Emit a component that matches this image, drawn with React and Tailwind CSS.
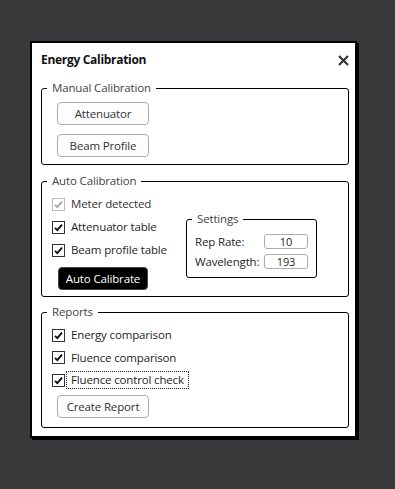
import React, { useState } from "react";

function Check({ checked, disabled, onChange, label, focused }) {
  return (
    <label className="flex items-center h-[18px] cursor-default select-none">
      <span
        onClick={disabled ? undefined : onChange}
        className={`flex items-center justify-center w-[13px] h-[13px] border bg-white ${
          disabled ? "border-[#bcbcbc]" : "border-[#333]"
        }`}
      >
        {checked && (
          <svg width="11" height="11" viewBox="0 0 11 11">
            <path
              d="M2 5.8 L4.3 8.2 L9 2.6"
              fill="none"
              stroke={disabled ? "#a8a8a8" : "#111"}
              strokeWidth="1.9"
            />
          </svg>
        )}
      </span>
      <span
        className={`ml-px px-[4px] leading-[16px] border ${
          focused ? "border-dotted border-[#222]" : "border-transparent"
        }`}
      >
        {label}
      </span>
    </label>
  );
}

function Group({ title, className = "", bodyClass = "", children }) {
  return (
    <fieldset className={`border border-black rounded-[3px] ${className}`}>
      <legend className="ml-[5px] px-[5px] text-[11.5px] tracking-[-0.15px] leading-[16px] text-[#444]">{title}</legend>
      <div className={bodyClass}>{children}</div>
    </fieldset>
  );
}

function Btn({ children }) {
  return (
    <button className="w-[92px] h-[23px] rounded-[4px] border border-[#adadad] bg-[#fdfdfd] text-[11.5px] tracking-[-0.15px] text-[#333]">
      {children}
    </button>
  );
}

export default function App() {
  const [checks, setChecks] = useState({
    att: true,
    beam: true,
    energy: true,
    fluence: true,
    control: true,
  });
  const toggle = (k) => () => setChecks({ ...checks, [k]: !checks[k] });

  return (
    <div
      className="w-[395px] h-[489px] bg-[#3a3a3d] pl-[30px] pt-[41px] text-[#1e1e1e]"
      style={{ fontFamily: "'Open Sans', 'Noto Sans', sans-serif" }}
    >
      <div className="w-[327px] h-[397px] bg-white border-2 border-black shadow-[2px_2px_0_#000] pl-[9px] pr-[6px] pt-[8px]">
        {/* Header */}
        <div className="flex items-center justify-between h-[18px]">
          <h1 className="text-[12px] font-bold tracking-[-0.3px] text-[#111]">Energy Calibration</h1>
          <svg width="11" height="11" viewBox="0 0 11 11">
            <path d="M1 1 L10 10 M10 1 L1 10" stroke="#333" strokeWidth="2.2" />
          </svg>
        </div>

        {/* Manual Calibration */}
        <Group title="Manual Calibration" className="mt-[11px]" bodyClass="pl-[15px] pt-[6px] pb-[7px]">
          <div className="flex flex-col gap-[9px]">
            <Btn>Attenuator</Btn>
            <Btn>Beam Profile</Btn>
          </div>
        </Group>

        {/* Auto Calibration */}
        <Group title="Auto Calibration" className="mt-[8px]" bodyClass="pl-[10px] pt-[6px] pb-[6px]">
          <div className="flex">
            <div className="w-[134px] text-[11.5px] tracking-[-0.15px]">
              <div className="flex flex-col gap-[5px]">
                <Check checked disabled label={<span className="text-[#333]">Meter detected</span>} />
                <Check checked={checks.att} onChange={toggle("att")} label="Attenuator table" />
                <Check checked={checks.beam} onChange={toggle("beam")} label="Beam profile table" />
              </div>
              <button className="mt-[8px] ml-[6px] w-[90px] h-[23px] rounded-[4px] bg-black border border-[#444] text-white text-[11.5px] tracking-[-0.15px] font-medium">
                Auto Calibrate
              </button>
            </div>
            <Group title="Settings" className="mt-[16px] w-[131px] h-[67px] self-start" bodyClass="px-[8px] pt-[7px]">
              <div className="flex flex-col gap-[5px] text-[11.5px] tracking-[-0.15px]">
                <div className="flex items-center justify-between h-[15px]">
                  <span>Rep Rate:</span>
                  <span className="w-[44px] h-[15px] border border-[#adadad] rounded-[3px] text-center text-[11px] leading-[13px]">10</span>
                </div>
                <div className="flex items-center justify-between h-[15px]">
                  <span>Wavelength:</span>
                  <span className="w-[44px] h-[15px] border border-[#adadad] rounded-[3px] text-center text-[11px] leading-[13px]">193</span>
                </div>
              </div>
            </Group>
          </div>
        </Group>

        {/* Reports */}
        <Group title="Reports" className="mt-[7px]" bodyClass="pl-[10px] pt-[6px] pb-[9px]">
          <div className="flex flex-col gap-[4.5px] text-[11.5px] tracking-[-0.15px]">
            <Check checked={checks.energy} onChange={toggle("energy")} label="Energy comparison" />
            <Check checked={checks.fluence} onChange={toggle("fluence")} label="Fluence comparison" />
            <Check checked={checks.control} onChange={toggle("control")} label="Fluence control check" focused />
          </div>
          <div className="mt-[4px] ml-[5px]">
            <Btn>Create Report</Btn>
          </div>
        </Group>
      </div>
    </div>
  );
}
